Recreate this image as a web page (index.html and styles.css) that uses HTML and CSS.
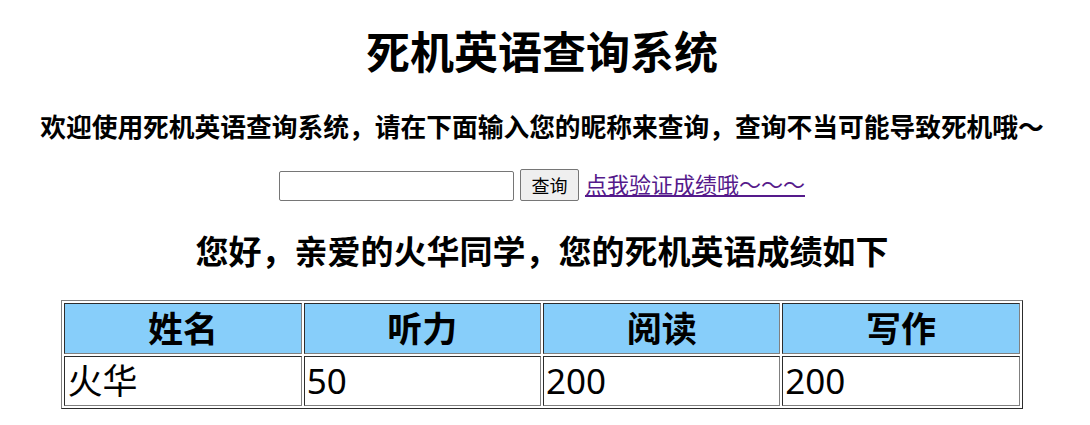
FILE: index.html
```html
<!DOCTYPE html>
<html lang="zh-CN">
<head>
<meta charset="utf-8">
<title>死机英语查询系统</title>
<link rel="stylesheet" href="styles.css">
</head>
<body>
<main class="page">
  <h1 class="title">死机英语查询系统</h1>
  <h3 class="intro">欢迎使用死机英语查询系统，请在下面输入您的昵称来查询，查询不当可能导致死机哦～</h3>
  <form class="search">
    <input class="search-input" type="text" aria-label="昵称">
    <button class="search-button" type="button">查询</button>
    <a class="search-link" href="#verify">点我验证成绩哦～～～</a>
  </form>
  <h2 class="greeting">您好，亲爱的火华同学，您的死机英语成绩如下</h2>
  <table class="scores">
    <thead>
      <tr><th>姓名</th><th>听力</th><th>阅读</th><th>写作</th></tr>
    </thead>
    <tbody>
      <tr><td>火华</td><td>50</td><td>200</td><td>200</td></tr>
    </tbody>
  </table>
</main>
</body>
</html>
```
FILE: styles.css
```css
body {
  margin: 0 14px 0 8px;
  background: #fff;
  color: #000;
  font-family: "Noto Sans", "Noto Sans CJK SC", sans-serif;
  font-size: 22px;
}

.page {
  display: flex;
  flex-direction: column;
  align-items: center;
  padding: 22px 0 16px;
}

.title {
  margin: 0;
  line-height: 60px;
}

.intro {
  margin: 28px 0 0;
  line-height: 34px;
  white-space: nowrap;
}

.search {
  display: flex;
  align-items: flex-end;
  gap: 6px;
  margin-top: 23px;
}

.search-input {
  box-sizing: border-box;
  width: 235px;
  height: 30px;
  border: 1px solid #767676;
  border-radius: 2px;
  font-size: 18px;
}

.search-button {
  box-sizing: border-box;
  width: 59px;
  height: 32px;
  padding: 0;
  border: 1px solid #767676;
  border-radius: 2px;
  background: #efefef;
  color: #000;
  font-family: inherit;
  font-size: 18px;
}

.search-link {
  color: #551a8b;
  line-height: 34px;
}

.greeting {
  margin: 29px 0 0;
  line-height: 44px;
}

.scores {
  width: 90%;
  margin-top: 26px;
  table-layout: fixed;
  border: 1px solid;
  border-color: #808080 #2c2c2c #2c2c2c #808080;
  border-spacing: 2px;
  font-size: 35px;
  line-height: 46px;
}

.scores th,
.scores td {
  padding: 1px 2px;
  border: 1px solid;
  border-color: #2c2c2c #808080 #808080 #2c2c2c;
}

.scores th {
  padding-top: 2px;
  background: #87cefa;
}
```
